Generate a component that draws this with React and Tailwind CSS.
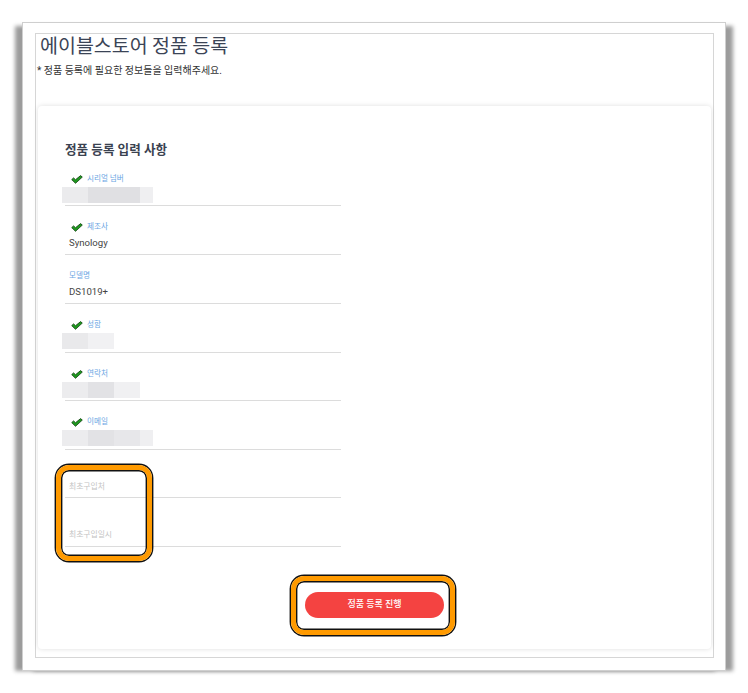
import React from "react";

const FONT = { fontFamily: 'Roboto, "Noto Sans CJK KR", sans-serif' };

function Check() {
  return (
    <svg width="12" height="9" viewBox="0 0 12 9" className="shrink-0">
      <path
        d="M0.7 4.6 L2.6 2.9 L4.5 4.7 L9.6 0.6 L11.3 2.1 L4.5 8.3 Z"
        fill="#1f9a1f"
        stroke="#0c3d0c"
        strokeWidth="0.8"
        strokeLinejoin="round"
      />
    </svg>
  );
}

// heights include the 1px underline
const fields = [
  { label: "시리얼 넘버", check: true, h: "h-[48px]", blur: ["#ebebed", "#e0e0e3", "#e0e0e3", "#efeff1"] },
  { label: "제조사", check: true, h: "h-[49px]", value: "Synology" },
  { label: "모델명", check: false, h: "h-[49px]", value: "DS1019+" },
  { label: "성함", check: true, h: "h-[49px]", blur: ["#e9e9eb", "#f1f1f3"] },
  { label: "연락처", check: true, h: "h-[48px]", blur: ["#ececee", "#e2e2e5", "#f0f0f2"] },
  { label: "이메일", check: true, h: "h-[49px]", blur: ["#ececee", "#e2e2e5", "#e7e7ea", "#efeff1"] },
];

function Field({ f }) {
  return (
    <div className={`${f.h} border-b border-[#dcdcdc] pt-[16px]`}>
      <div className={`flex h-[10px] items-center gap-[4px] ${f.check ? "pl-[6px]" : "pl-[4px]"}`}>
        {f.check && <Check />}
        <span className="text-[7.6px] leading-[10px] text-[#6aa6e3]">{f.label}</span>
      </div>
      <div className="mt-[3px] flex h-[16px] items-center">
        {f.blur ? (
          <div className="-ml-[3px] flex h-[16px]">
            {f.blur.map((c, i) => (
              <div
                key={i}
                className={i === f.blur.length - 1 && f.blur.length === 4 ? "h-full w-[13px]" : "h-full w-[26px]"}
                style={{ background: c }}
              />
            ))}
          </div>
        ) : (
          <span className="pl-[4px] text-[9.6px] text-[#454545]">{f.value}</span>
        )}
      </div>
    </div>
  );
}

function Placeholder({ text, h }) {
  return (
    <div className={`${h} border-b border-[#dcdcdc] pt-[29px]`}>
      <div className="flex h-[16px] items-center pl-[4px] text-[7.8px] text-[#c4c4c4]">{text}</div>
    </div>
  );
}

function Mark({ className }) {
  return (
    <div
      className={`pointer-events-none absolute rounded-[13px] border-[5px] border-[#ff9a00] shadow-[0_0_0_1.4px_#111,inset_0_0_0_1.4px_#111] ${className}`}
    />
  );
}

export default function App() {
  return (
    <div className="min-h-[693px] bg-white pl-[22px] pt-[22px]" style={FONT}>
      <div className="h-[649px] w-[704px] border border-[#cfcfcf] bg-white pl-[12px] pr-[11px] pt-[10px] shadow-[-9px_2px_4px_-2px_#9c9c9c,9px_2px_4px_-2px_#9c9c9c]">
        <div className="h-[625px] border border-[#d6d6d6] bg-white">
          <h1
            className="h-[26px] pl-[4px] text-[19.5px] font-normal leading-[21px] text-[#3b4456]"
            style={{ fontFamily: '"Noto Sans CJK KR", sans-serif' }}
          >
            에이블스토어 정품 등록
          </h1>
          <p className="mt-[4px] h-[14px] pl-[1px] text-[10px] leading-[14px] text-[#333]">
            * 정품 등록에 필요한 정보들을 입력해주세요.
          </p>

          <div className="mx-[2px] mt-[28px] h-[543px] rounded-[4px] bg-white pt-[36px] shadow-[0_0_5px_rgba(0,0,0,0.13)]">
            <h2 className="ml-[27px] h-[16px] text-[12.6px] font-bold leading-[16px] text-[#3a4250]">
              정품 등록 입력 사항
            </h2>

            <div className="ml-[27px] w-[276px]">
              {fields.map((f) => (
                <Field key={f.label} f={f} />
              ))}
              <div className="relative">
                <Placeholder text="최초구입처" h="h-[48px]" />
                <Placeholder text="최초구입일시" h="h-[49px]" />
                <Mark className="-left-[9px] top-[15px] h-[96px] w-[96px]" />
              </div>
            </div>

            <div className="mt-[43px] flex justify-center">
              <div className="relative">
                <button className="h-[26px] w-[139px] rounded-full bg-[#f44341] text-[9px] font-medium text-white">
                  정품 등록 진행
                </button>
                <Mark className="-bottom-[17px] -left-[14px] -right-[11px] -top-[14px]" />
              </div>
            </div>
          </div>
        </div>
      </div>
    </div>
  );
}
